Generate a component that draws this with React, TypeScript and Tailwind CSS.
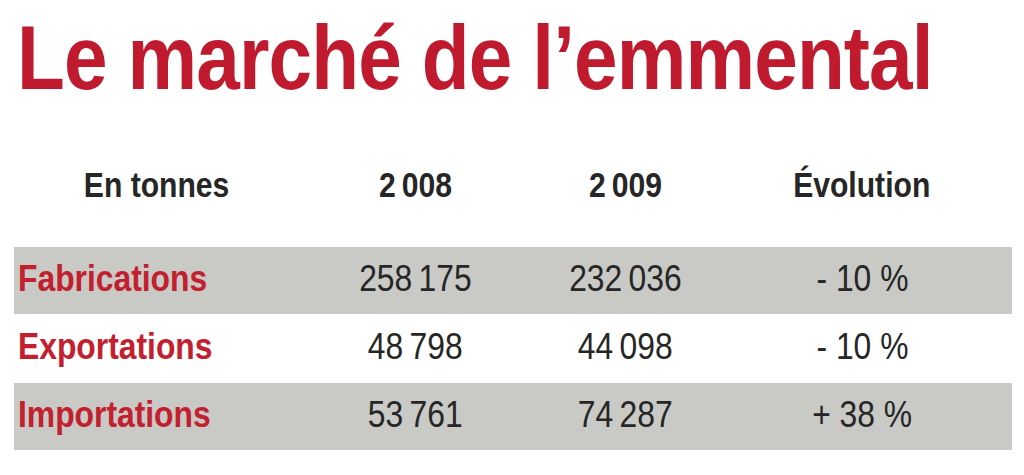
const rows = [
  { label: 'Fabrications', y2008: '258\u2009175', y2009: '232\u2009036', evo: '- 10 %', shaded: true },
  { label: 'Exportations', y2008: '48\u2009798', y2009: '44\u2009098', evo: '- 10 %', shaded: false },
  { label: 'Importations', y2008: '53\u2009761', y2009: '74\u2009287', evo: '+ 38 %', shaded: true },
]

const sans = { fontFamily: '"Liberation Sans", Arial, sans-serif' }

function Cell({ children, className = '' }: { children: React.ReactNode; className?: string }) {
  return (
    <div className={`flex justify-center ${className}`}>
      <span className="inline-block whitespace-nowrap scale-x-[0.86]">{children}</span>
    </div>
  )
}

export default function App() {
  return (
    <div className="w-[1024px] h-[475px] bg-white overflow-hidden" style={sans}>
      <h1 className="pl-[17px] pt-[10px] h-[114px] text-[90px] leading-[96px] font-bold text-[#c01a2f] tracking-[-1px] whitespace-nowrap">
        <span className="inline-block origin-left scale-x-[0.87]">Le marché de l’emmental</span>
      </h1>

      <div className="mx-[14px] w-[998px]">
        <div className="grid grid-cols-[286px_230px_190px_1fr] h-[133px] pt-[53px] text-[35px] font-bold text-[#262626] leading-none">
          <Cell>En tonnes</Cell>
          <Cell>2{'\u2009'}008</Cell>
          <Cell>2{'\u2009'}009</Cell>
          <Cell className="pr-[8px]">Évolution</Cell>
        </div>

        {rows.map((row) => (
          <div
            key={row.label}
            className={`grid grid-cols-[286px_230px_190px_1fr] items-center pb-[4px] text-[37px] leading-none ${
              row.shaded ? 'h-[67px] bg-[#c9c9c5]' : 'h-[69px] bg-white'
            }`}
          >
            <div className="pl-[4px] font-bold text-[#c3202f] whitespace-nowrap">
              <span className="inline-block origin-left scale-x-[0.86]">{row.label}</span>
            </div>
            <Cell className="text-[#262626]">{row.y2008}</Cell>
            <Cell className="text-[#262626]">{row.y2009}</Cell>
            <Cell className="pr-[8px] text-[#262626]">{row.evo}</Cell>
          </div>
        ))}
      </div>
    </div>
  )
}
